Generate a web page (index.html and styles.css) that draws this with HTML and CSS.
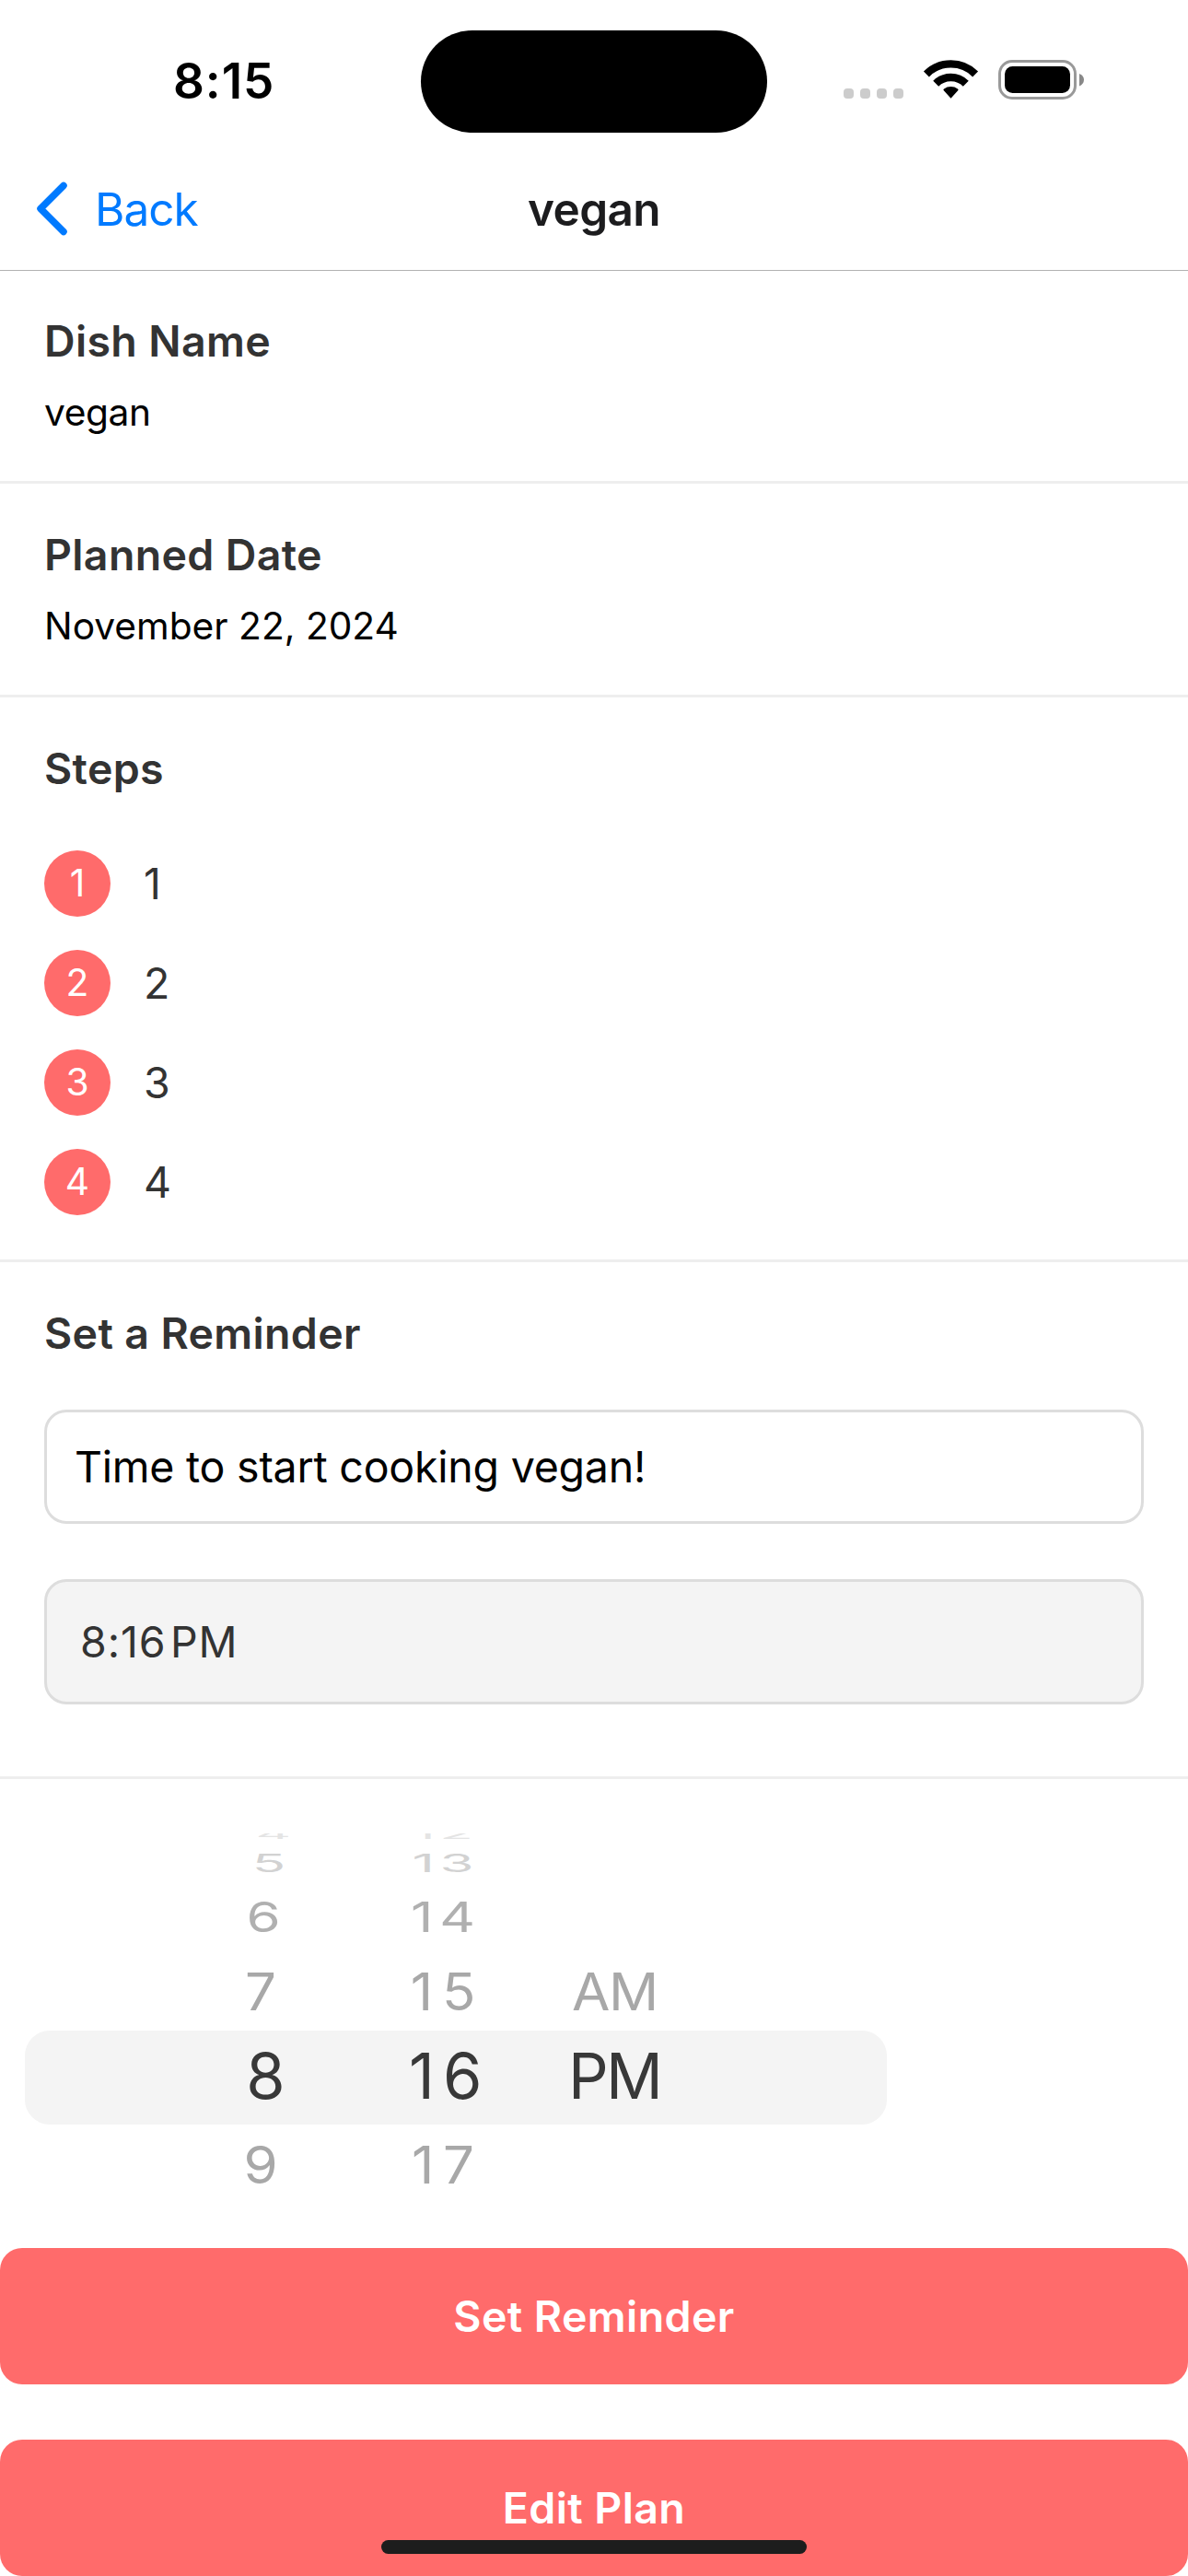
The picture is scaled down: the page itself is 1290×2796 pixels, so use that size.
FILE: index.html
```
<!DOCTYPE html>
<html lang="en">
<head>
<meta charset="utf-8">
<title>vegan</title>
<link rel="stylesheet" href="styles.css">
</head>
<body>
<div class="screen">
  <div class="status-bar">
    <div class="clock">8:15</div>
    <div class="island"></div>
    <svg class="status-icons" width="262" height="44" viewBox="0 0 262 44" aria-hidden="true">
      <g fill="#ccc">
        <rect x="0" y="31" width="11" height="11" rx="4"/>
        <rect x="18" y="31" width="11" height="11" rx="4"/>
        <rect x="36" y="31" width="11" height="11" rx="4"/>
        <rect x="54" y="31" width="11" height="11" rx="4"/>
      </g>
      <g fill="none" stroke="#000" stroke-width="8.4">
        <path d="M89.9 15.4A37.7 37.7 0 0 1 143.1 15.4"/>
        <path d="M100.2 25.7A23.1 23.1 0 0 1 132.8 25.7"/>
      </g>
      <path d="M108.8 33.2Q107.8 32.2 109 31.4A13 13 0 0 1 124 31.4Q125.2 32.2 124.2 33.2L116.5 41.8Z"/>
      <rect x="169.5" y="1.5" width="82" height="40" rx="13.5" fill="none" stroke="#999" stroke-width="3"/>
      <rect x="175" y="7" width="71" height="29" rx="8.5"/>
      <path d="M256 15Q261 17 261 21.500Q261 26 256 28.500Z" fill="#888"/>
    </svg>
  </div>

  <header class="nav">
    <a class="back">
      <svg width="36" height="60" viewBox="0 0 36 60" aria-hidden="true">
        <path d="M31 5.500L6 30.500L31 55.500" fill="none" stroke="#007aff" stroke-width="7.500" stroke-linecap="round" stroke-linejoin="round"/>
      </svg>
      <span>Back</span>
    </a>
    <h1 class="nav-title">vegan</h1>
    <div></div>
  </header>

  <section class="section">
    <h2>Dish Name</h2>
    <p class="value tight">vegan</p>
  </section>

  <section class="section">
    <h2>Planned Date</h2>
    <p class="value">November 22, 2024</p>
  </section>

  <section class="section steps">
    <h2>Steps</h2>
    <ol>
      <li><span class="badge">1</span><span>1</span></li>
      <li><span class="badge">2</span><span>2</span></li>
      <li><span class="badge">3</span><span>3</span></li>
      <li><span class="badge">4</span><span>4</span></li>
    </ol>
  </section>

  <section class="section reminder">
    <h2>Set a Reminder</h2>
    <div class="field">Time to start cooking vegan!</div>
    <div class="field time"><p>8:16<span class="narrow">&#8239;</span>PM</p></div>
  </section>

  <div class="picker">
    <div class="row r4"><span class="hour">4</span><span class="minute">12</span></div>
    <div class="row r5"><span class="hour">5</span><span class="minute">13</span></div>
    <div class="row r6"><span class="hour">6</span><span class="minute">14</span></div>
    <div class="row r7"><span class="hour">7</span><span class="minute">15</span><span class="period">AM</span></div>
    <div class="row selected"><span class="hour">8</span><span class="minute">16</span><span class="period">PM</span></div>
    <div class="row r9"><span class="hour">9</span><span class="minute">17</span></div>
  </div>

  <div class="actions">
    <div class="button">Set Reminder</div>
    <div class="button">Edit Plan</div>
  </div>
  <div class="home-indicator"></div>
</div>
</body>
</html>
```
FILE: styles.css
```
* { box-sizing: border-box; margin: 0; padding: 0; }

body {
  background: #fff;
  color: #000;
  font-family: Inter, "Liberation Sans", sans-serif;
  -webkit-font-smoothing: antialiased;
}

.screen {
  position: relative;
  width: 1290px;
  height: 2796px;
  overflow: hidden;
}

/* Status bar */
.status-bar { display: flex; align-items: flex-start; height: 177px; }
.clock {
  width: 457px;
  padding-left: 188px;
  margin-top: 58px;
  font-size: 53px;
  line-height: 60px;
  font-weight: 600;
  letter-spacing: 0.9px;
}
.island { width: 376px; height: 111px; margin-top: 33px; border-radius: 56px; background: #000; }
.status-icons { margin: 65px 0 0 83px; }

/* Navigation header */
.nav {
  display: grid;
  grid-template-columns: 1fr auto 1fr;
  align-items: center;
  height: 117px;
  padding-bottom: 16px;
  border-bottom: 1px solid #b2b2b2;
  font-size: 49.5px;
  line-height: 60px;
}
.back { display: flex; align-items: center; gap: 29px; padding-left: 38px; color: #007aff; letter-spacing: -1px; }
.back svg { display: block; margin-top: -2px; }
.nav-title { font-size: inherit; font-weight: 600; letter-spacing: -0.6px; color: #1c1c1e; }

/* Content sections */
.section { padding: 49px 48px; border-bottom: 3px solid #eee; }
.nav + .section { padding-top: 48px; }
h2 { font-size: 46.5px; line-height: 56px; font-weight: 600; letter-spacing: 0.35px; color: #333; }
.value { margin-top: 25px; font-size: 40.7px; line-height: 50px; }
.tight { letter-spacing: -0.4px; }

.steps { padding-bottom: 48px; }
.steps ol { display: flex; flex-direction: column; gap: 36px; margin-top: 61px; list-style: none; }
.steps li { display: flex; align-items: center; gap: 36px; font-size: 46.5px; line-height: 72px; color: #333; }
.badge {
  width: 72px;
  height: 72px;
  border-radius: 50%;
  background: #ff6b6b;
  color: #fff;
  font-size: 40.7px;
  text-align: center;
}

.reminder { padding-bottom: 78px; }
.field {
  display: flex;
  align-items: center;
  height: 124px;
  margin-top: 55px;
  padding: 0 30px;
  border: 3px solid #ddd;
  border-radius: 24px;
  font-size: 46.5px;
  letter-spacing: -0.23px;
}
.field.time {
  height: 136px;
  margin-top: 60px;
  padding: 0 36px;
  background: #f4f4f4;
  color: #333;
  letter-spacing: 0.9px;
}
.narrow { letter-spacing: -4px; }

/* Time picker wheel */
.picker {
  width: 963px;
  height: 401px;
  margin-top: 59px;
  padding-left: 27px;
  overflow: hidden;
}
.row {
  display: grid;
  grid-template-columns: 90px 90px 1fr;
  column-gap: 109px;
  padding-left: 212px;
  align-content: center;
  text-align: center;
  font-size: 60px;
  line-height: 60px;
  color: #a8a8a8;
}
.row span { transform: translate(var(--shift, 0), var(--lift, 0)) scaleY(var(--squash, 1)); }
.row .minute { --shift: -2px; letter-spacing: var(--spread); text-indent: var(--spread); }
.row .period { --shift: 0; text-align: left; margin-left: -16px; letter-spacing: -1.5px; }
.r4 { --squash: 0.25; --shift: 13px; --lift: -6px; --spread: 4.6px; height: 12px; color: #e4e4e4; }
.r5 { --squash: 0.46; --shift: 8px; --spread: 5.6px; height: 40px; color: #d2d2d2; }
.r6 { --squash: 0.757; --shift: 2px; --spread: 7px; height: 75px; color: #b0b0b0; }
.r7 { --squash: 0.94; --shift: -1px; --spread: 9.8px; height: 87px; }
.r9 { --squash: 0.94; --shift: -1px; --spread: 9.8px; height: 85px; }
.selected {
  --shift: 4.5px;
  --lift: -1px;
  --spread: 9.1px;
  height: 102px;
  border-radius: 27px;
  background: #f4f4f4;
  color: #383838;
  font-size: 68.5px;
}
.selected .minute { --shift: -3px; }
.selected .period { margin-left: -20px; letter-spacing: -2.7px; }

/* Bottom actions */
.actions { display: flex; flex-direction: column; gap: 60px; margin-top: 49px; }
.button {
  height: 148px;
  border-radius: 24px;
  background: #ff6b6b;
  color: #fff;
  font-size: 46.5px;
  line-height: 148px;
  font-weight: 600;
  letter-spacing: 0.4px;
  text-align: center;
}
.home-indicator {
  position: absolute;
  left: 414px;
  bottom: 24px;
  width: 462px;
  height: 15px;
  border-radius: 8px;
  background: #1d1d1d;
}
```
